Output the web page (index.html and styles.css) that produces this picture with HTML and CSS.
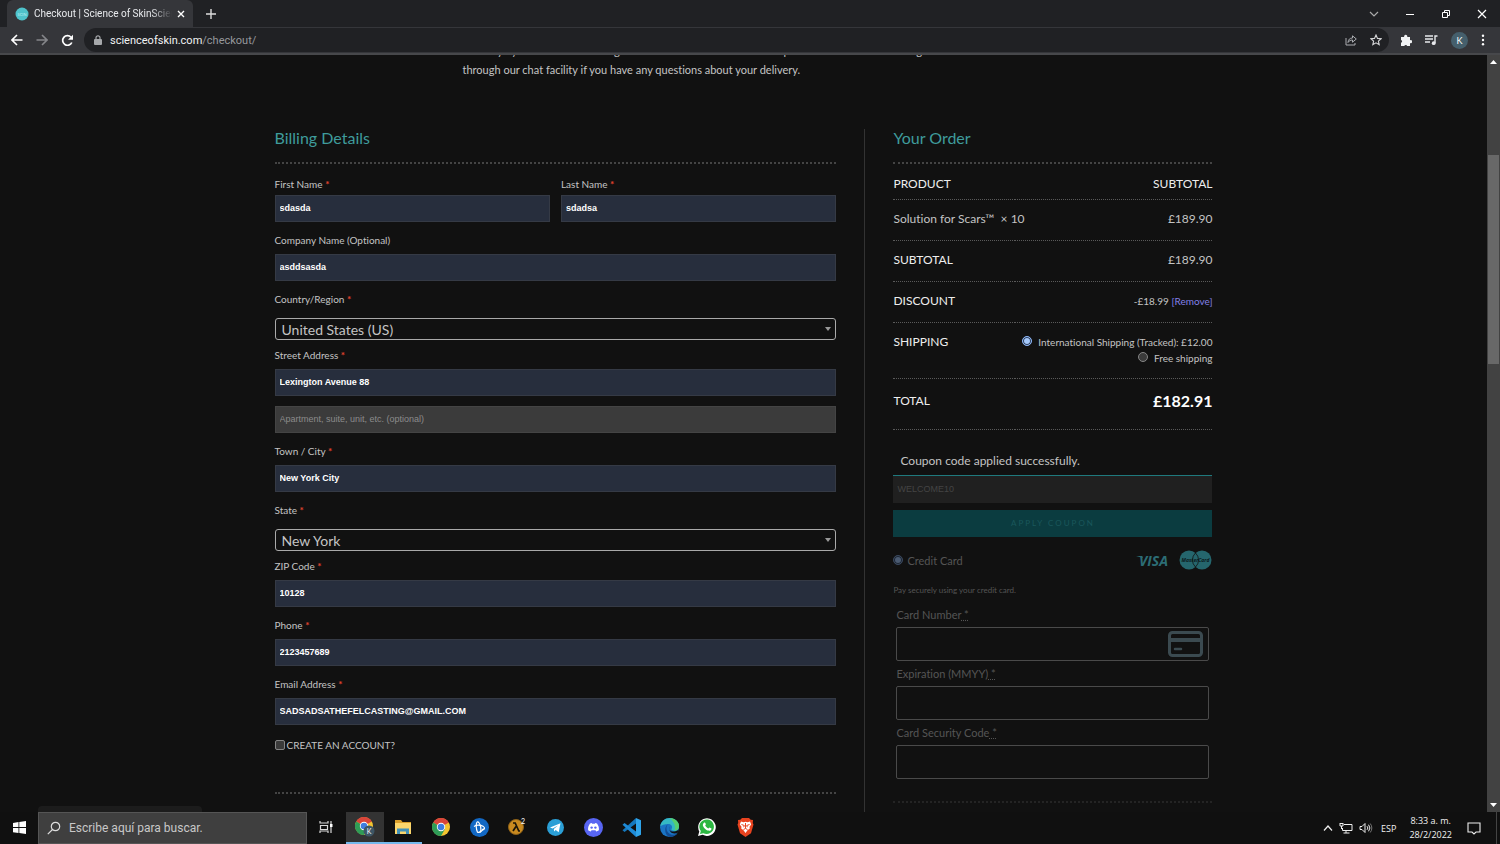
FILE: index.html
```html
<!DOCTYPE html>
<html lang="en">
<head>
  <meta charset="UTF-8">
  <title>Checkout | Science of Skin</title>
  <link rel="stylesheet" href="styles.css">
</head>
<body>

  <!-- browser tabs -->
  <div class="tab-strip">
    <div class="tab">
      <svg class="favicon" viewBox="0 0 14 14"><circle cx="7" cy="7" r="6.5" fill="#4fc3cb"/><text x="7" y="9" class="favicon-text">SCIN</text></svg>
      <span class="tab-title">Checkout | Science of SkinScience</span>
      <button class="icon-btn tab-close" aria-label="Close tab"><svg width="8" height="8" viewBox="0 0 8 8"><path d="M1 1l6 6M7 1L1 7" stroke="#fff" stroke-width="1.4"/></svg></button>
    </div>
    <button class="icon-btn new-tab" aria-label="New tab"><svg width="10" height="10" viewBox="0 0 10 10"><path d="M5 0v10M0 5h10" stroke="#ddd" stroke-width="1.4"/></svg></button>
    <div class="window-buttons">
      <button class="icon-btn" aria-label="Search tabs"><svg width="10" height="10" viewBox="0 0 10 10"><path d="M1 3l4 4 4-4" fill="none" stroke="#aaa" stroke-width="1.2"/></svg></button>
      <button class="icon-btn" aria-label="Minimize"><svg width="10" height="10" viewBox="0 0 10 10"><path d="M1 5.500h8" stroke="#fff"/></svg></button>
      <button class="icon-btn" aria-label="Restore"><svg width="10" height="10" viewBox="0 0 10 10"><path d="M1.500 3.500h5v5h-5zM3.500 3.500v-2h5v5h-2" fill="none" stroke="#fff"/></svg></button>
      <button class="icon-btn" aria-label="Close"><svg width="10" height="10" viewBox="0 0 10 10"><path d="M1 1l8 8M9 1L1 9" stroke="#fff" stroke-width="1.2"/></svg></button>
    </div>
  </div>

  <!-- address bar -->
  <div class="toolbar">
    <button class="icon-btn" aria-label="Back"><svg width="12" height="12" viewBox="0 0 12 12"><path d="M11.500 6H1.500M6 1L1 6l5 5" fill="none" stroke="#fff" stroke-width="1.6"/></svg></button>
    <button class="icon-btn" aria-label="Forward"><svg width="12" height="12" viewBox="0 0 12 12"><path d="M.5 6h10M6 1l5 5-5 5" fill="none" stroke="#85868a" stroke-width="1.600"/></svg></button>
    <button class="icon-btn" aria-label="Reload"><svg width="13" height="13" viewBox="0 0 13 13"><path d="M10.800 8.500A4.800 4.800 0 1 1 10 3.200" fill="none" stroke="#fff" stroke-width="1.700"/><path d="M12 .8v5H7z" fill="#fff"/></svg></button>
    <div class="omnibox">
      <svg width="8" height="10" viewBox="0 0 8 10"><rect y="4" width="8" height="6" rx="1" fill="#a6a8ab"/><path d="M2 4.500V2.800a2 2 0 0 1 4 0v1.700" fill="none" stroke="#a6a8ab" stroke-width="1.200"/></svg>
      <div class="url">scienceofskin.com<span>/checkout/</span></div>
      <button class="icon-btn" aria-label="Share"><svg width="12" height="12" viewBox="0 0 12 12"><path d="M1 4v7h9V9" fill="none" stroke="#aaacb0"/><path d="M3 8.500c.3-3 1.800-4.500 4.500-4.500V1.800L11.300 5 7.500 8.200V6C5.500 6 4 6.800 3 8.500z" fill="none" stroke="#aaacb0"/></svg></button>
      <button class="icon-btn" aria-label="Bookmark"><svg width="12" height="12" viewBox="0 0 12 12"><path d="M6 1l1.500 3.400 3.600.3-2.700 2.400.8 3.600L6 8.800l-3.200 1.900.8-3.600L.9 4.700l3.600-.3z" fill="none" stroke="#d6d7d9" stroke-width="1.100"/></svg></button>
    </div>
    <button class="icon-btn" aria-label="Extensions"><svg width="12" height="12" viewBox="0 0 12 12"><path d="M1 3h3.200a1.600 1.600 0 1 1 3 0H10v3.200a1.500 1.500 0 1 1 0 2.800v3H7.200a1.500 1.500 0 0 0-2.900 0H1V8.800a1.500 1.500 0 0 0 0-2.900z" fill="#f1f3f4"/></svg></button>
    <button class="icon-btn" aria-label="Media"><svg width="13" height="12" viewBox="0 0 13 12"><path d="M0 2h8M0 5h8M0 8h5" stroke="#e8eaed" stroke-width="1.400"/><path d="M12.500 2H10v7" fill="none" stroke="#e8eaed" stroke-width="1.400"/><circle cx="8.700" cy="9.200" r="1.900" fill="#e8eaed"/></svg></button>
    <button class="avatar" aria-label="Profile">K</button>
    <button class="icon-btn" aria-label="Menu"><svg width="4" height="12" viewBox="0 0 4 12"><g fill="#fff"><circle cx="2" cy="1.800" r="1.200"/><circle cx="2" cy="6" r="1.200"/><circle cx="2" cy="10.200" r="1.200"/></g></svg></button>
  </div>

  <div class="viewport">
    <main class="page">
      <p class="intro">Delivery by mail often takes long in most of the areas where we ship to. Do send us all a message<br>through our chat facility if you have any questions about your delivery.</p>

      <form class="checkout">
        <section class="billing">
          <h2>Billing Details</h2>

          <div class="field-row">
            <div class="field">
              <label for="firstName">First Name <em>*</em></label>
              <input type="text" id="firstName" value="sdasda">
            </div>
            <div class="field">
              <label for="lastName">Last Name <em>*</em></label>
              <input type="text" id="lastName" value="sdadsa">
            </div>
          </div>
          <div class="field">
            <label for="company">Company Name (Optional)</label>
            <input type="text" id="company" value="asddsasda">
          </div>
          <div class="field select-field">
            <label for="country">Country/Region <em>*</em></label>
            <div class="select-wrap"><select id="country"><option>United States (US)</option></select></div>
          </div>
          <div class="field">
            <label for="address1">Street Address <em>*</em></label>
            <input type="text" id="address1" value="Lexington Avenue 88">
            <input type="text" class="empty" aria-label="Apartment" placeholder="Apartment, suite, unit, etc. (optional)">
          </div>
          <div class="field">
            <label for="city">Town / City <em>*</em></label>
            <input type="text" id="city" value="New York City">
          </div>
          <div class="field select-field">
            <label for="state">State <em>*</em></label>
            <div class="select-wrap"><select id="state"><option>New York</option></select></div>
          </div>
          <div class="field">
            <label for="zip">ZIP Code <em>*</em></label>
            <input type="text" id="zip" value="10128">
          </div>
          <div class="field">
            <label for="phone">Phone <em>*</em></label>
            <input type="tel" id="phone" value="2123457689">
          </div>
          <div class="field">
            <label for="email">Email Address <em>*</em></label>
            <input type="text" id="email" value="SADSADSATHEFELCASTING@GMAIL.COM">
          </div>
          <div class="create-account">
            <input type="checkbox" id="createAccount">
            <label for="createAccount">CREATE AN ACCOUNT?</label>
          </div>
        </section>

        <section class="order">
          <h2>Your Order</h2>

          <table class="order-table">
            <thead>
              <tr><th>PRODUCT</th><th>SUBTOTAL</th></tr>
            </thead>
            <tbody>
              <tr><td>Solution for Scars™ &nbsp;× 10</td><td>£189.90</td></tr>
              <tr><th>SUBTOTAL</th><td>£189.90</td></tr>
              <tr><th>DISCOUNT</th><td class="small">-£18.99 <a href="#">[Remove]</a></td></tr>
              <tr class="shipping">
                <th>SHIPPING</th>
                <td class="small">
                  <div><input type="radio" name="shipping" id="shipTracked" checked><label for="shipTracked">International Shipping (Tracked): £12.00</label></div>
                  <div><input type="radio" name="shipping" id="shipFree"><label for="shipFree">Free shipping</label></div>
                </td>
              </tr>
              <tr class="total"><th>TOTAL</th><td>£182.91</td></tr>
            </tbody>
          </table>

          <p class="notice">Coupon code applied successfully.</p>

          <!-- faded while the order is being refreshed -->
          <div class="payment">
            <input type="text" class="coupon" aria-label="Coupon code" value="WELCOME10">
            <button type="button" class="apply-coupon">APPLY COUPON</button>
            <div class="method">
              <input type="radio" name="method" id="creditCard" checked>
              <label for="creditCard">Credit Card</label>
              <svg class="visa" width="38" height="20" viewBox="0 0 38 20"><text x="4" y="16" class="visa-text">VISA</text><path d="M1 6h6l1 2z" fill="#2c6d75"/></svg>
              <svg width="33" height="20" viewBox="0 0 33 20"><circle cx="10" cy="10" r="9.500" fill="#25666d"/><circle cx="23" cy="10" r="9.500" fill="#25666d"/><path d="M16.500 3a9.500 9.500 0 0 0 0 14 9.500 9.500 0 0 0 0-14z" fill="none" stroke="#111" stroke-width=".8"/><text x="16.500" y="12" class="mc-text">MasterCard</text></svg>
            </div>
            <p class="hint">Pay securely using your credit card.</p>
            <div class="card-fields">
              <label for="cardNumber">Card Number<abbr title="required"> *</abbr></label>
              <div class="card-input">
                <input type="text" id="cardNumber">
                <svg width="35" height="26" viewBox="0 0 35 26"><rect x="1.500" y="1.500" width="32" height="23" rx="3" fill="none" stroke="#3b4a50" stroke-width="3"/><path d="M1 9h33" stroke="#3b4a50" stroke-width="4"/><path d="M7 18h6" stroke="#3b4a50" stroke-width="2.500" stroke-linecap="round"/></svg>
              </div>
              <label for="expiry">Expiration (MMYY)<abbr title="required"> *</abbr></label>
              <div class="card-input"><input type="text" id="expiry"></div>
              <label for="cvc">Card Security Code<abbr title="required"> *</abbr></label>
              <div class="card-input"><input type="text" id="cvc"></div>
            </div>
          </div>
        </section>
      </form>
    </main>

    <div class="scrollbar">
      <svg width="7" height="4" viewBox="0 0 7 4"><path d="M0 4l3.500-4L7 4z" fill="#fff"/></svg>
      <div class="thumb"></div>
      <svg width="7" height="4" viewBox="0 0 7 4"><path d="M0 0l3.500 4L7 0z" fill="#fff"/></svg>
    </div>
    <div class="status-bubble"></div>
  </div>

  <footer class="taskbar">
    <button class="task start" aria-label="Start"><svg width="13" height="13" viewBox="0 0 13 13"><path d="M0 1.900L5.500 1v5.100H0zM6.300.9L13 0v6.100H6.300zM0 6.900h5.500V12L0 11.200zM6.300 6.900H13V13l-6.700-.9z" fill="#fff"/></svg></button>
    <div class="search">
      <svg width="14" height="14" viewBox="0 0 14 14"><circle cx="8.500" cy="5.500" r="4.200" fill="none" stroke="#ddd" stroke-width="1.200"/><path d="M5.500 8.500L.8 13.200" stroke="#ddd" stroke-width="1.200"/></svg>
      <input type="text" aria-label="Buscar" placeholder="Escribe aquí para buscar.">
    </div>
    <button class="task" aria-label="Task view"><svg width="14" height="12" viewBox="0 0 14 12"><path d="M1 0v2h8V0M1 12v-2h8v2M1.500 4.500h7v4h-7zM12 0v12" fill="none" stroke="#d8d8d8" stroke-width="1.200"/><rect x="11" y="3" width="2.500" height="3" fill="#fff"/></svg></button>
    <button class="task active" aria-label="Chrome profile K"><svg width="20" height="20" viewBox="0 0 20 20"><circle cx="9" cy="9" r="9" fill="#f4c430"/><path d="M9 9L1.200 4.500A9 9 0 0 1 16.800 4.500z" fill="#d9453a"/><path d="M1.200 4.500A9 9 0 0 0 9 18l3.900-6.800L9 9z" fill="#2f9c57"/><circle cx="9" cy="9" r="4.200" fill="#fff"/><circle cx="9" cy="9" r="3.300" fill="#3f7de0"/><circle cx="14" cy="14" r="5.500" fill="#3d5666"/><text x="14" y="16.500" class="badge-text">K</text></svg></button>
    <button class="task open" aria-label="File Explorer"><svg width="18" height="16" viewBox="0 0 18 16"><path d="M1 1h6l1.500 2H17v12H1z" fill="#d99f2b"/><path d="M1 4h16v11H1z" fill="#fbd66c"/><path d="M3 15V9.500h12V15h-3v-2.500H6V15z" fill="#4391b8"/></svg></button>
    <button class="task" aria-label="Chrome"><svg width="18" height="18" viewBox="0 0 18 18"><circle cx="9" cy="9" r="9" fill="#f4c430"/><path d="M9 9L1.200 4.500A9 9 0 0 1 16.800 4.500z" fill="#d9453a"/><path d="M1.200 4.500A9 9 0 0 0 9 18l3.900-6.800L9 9z" fill="#2f9c57"/><circle cx="9" cy="9" r="4.200" fill="#fff"/><circle cx="9" cy="9" r="3.300" fill="#3f7de0"/></svg></button>
    <button class="task" aria-label="Battle.net"><svg width="19" height="19" viewBox="0 0 19 19"><circle cx="9.500" cy="9.500" r="9.500" fill="#1268c4"/><g fill="none" stroke="#fff" stroke-width="1.200"><path d="M7 4c1.500-.8 3 2 3.600 4.500.6 2.500.2 5-.8 6"/><path d="M4 8.500c2-1.700 6-2 9-.2 2.500 1.500 1.800 3-1 3.800"/><path d="M7 4C5.800 6 6 11 7.500 14.200c2 .8 4.500-1.200 6-3.700"/></g></svg></button>
    <button class="task" aria-label="Half-Life"><svg width="18" height="18" viewBox="0 0 18 18"><circle cx="8" cy="9" r="7.500" fill="#c98a20" stroke="#8c6018"/><path d="M5 5h2.200l3.600 8H12M8 8.500L5 13" fill="none" stroke="#1a1408" stroke-width="1.700"/><text x="15" y="6" class="hl-text">2</text></svg></button>
    <button class="task" aria-label="Telegram"><svg width="17" height="17" viewBox="0 0 17 17"><circle cx="8.500" cy="8.500" r="8.500" fill="#2b9fd6"/><path d="M3 8.500l10.500-4.200-1.800 9-3-2.200-1.600 1.500-.3-2.600L11 6.500l-5.400 3z" fill="#fff"/></svg></button>
    <button class="task" aria-label="Discord"><svg width="19" height="19" viewBox="0 0 19 19"><circle cx="9.500" cy="9.500" r="9.500" fill="#5865f2"/><path d="M6 5.500l1.700-.5.500.8h2.600l.5-.8 1.700.5c1.600 2.200 2.200 4.500 1.900 6.700-.9.800-1.800 1.100-2.700 1.300l-.7-1.200H7.500l-.7 1.200c-.9-.2-1.800-.5-2.700-1.300-.3-2.200.3-4.500 1.900-6.700z" fill="#fff"/><circle cx="7.600" cy="9.600" r="1.200" fill="#5865f2"/><circle cx="11.400" cy="9.600" r="1.200" fill="#5865f2"/></svg></button>
    <button class="task" aria-label="VS Code"><svg width="19" height="19" viewBox="0 0 19 19"><path d="M14 0l5 2.300v14.400L14 19z" fill="#2fa4ea"/><path d="M14 0v5.500L2.500 14 .5 12.300z" fill="#1478be"/><path d="M14 19v-5.500L2.500 5 .5 6.700z" fill="#1e8ad6"/></svg></button>
    <button class="task" aria-label="Edge"><svg width="19" height="19" viewBox="0 0 19 19"><circle cx="9.500" cy="9.500" r="9.500" fill="#1b74c4"/><path d="M.3 8.500C1 3 5.200 0 9.800 0 15 0 19 3.800 19 8.200c0 3-2.300 4.600-4.700 4.600-1.800 0-3.300-.8-2.800-1.800 1.500-2.200 0-5-3.200-5C4.800 6 1.500 7 .3 8.500z" fill="#35b9c4"/><path d="M9.800 0C15 0 19 3.800 19 8.200c0 3-2.300 4.600-4.700 4.600 2-3 .5-8-4.500-12.800z" fill="#55cf70"/><path d="M8.300 6c-3 2.500-2.500 8.500 2.500 10.500 2.500.8 5 .2 7-1.500a9.500 9.500 0 0 1-8.300 4C4 17 4 8 8.300 6z" fill="#124c94"/><path d="M9.800 8.300c-1.500 3.500.8 5.700 4.500 5.200 1.800-.2 3.400-.9 4.400-1.700l-.9 2.700c-4 2.700-10 0-8-6.200z" fill="#111"/></svg></button>
    <button class="task" aria-label="WhatsApp"><svg width="18" height="18" viewBox="0 0 18 18"><path d="M0 18l1.300-4.600A8.800 8.800 0 1 1 4.700 16.800z" fill="#fff"/><path d="M2 16l.8-2.900A7.300 7.300 0 1 1 5.300 15.200z" fill="#2cb742"/><path d="M6 4.800c.8-.7 1.300-.2 1.900 1.500L7.200 7.500c.8 1.500 1.800 2.400 3.200 3l1.100-1.100 2 1c0 1.900-1.600 2.500-2.900 2.200-2.800-.6-5.500-3.300-5.800-5.700 0-.8.500-1.500 1.200-2.100z" fill="#fff"/></svg></button>
    <button class="task" aria-label="Brave"><svg width="17" height="19" viewBox="0 0 17 19"><path d="M5 0h7l1.700 1.800L16 2l-.2 3 .7 1.500-2.500 8.700L8.500 19 3 15.200.5 6.500 1.200 5 1 2l2.300-.2z" fill="#e8431f"/><path d="M4 3.500l2.500.7 2-.4 2 .4 2.500-.7 1.200 3-1.700 2.300.3 1.700-2.300 1.700L8.500 15l-2-2.800-2.300-1.700.3-1.700-1.700-2.300z" fill="#fff"/><path d="M4.500 6.500l2.800 1-.6 1.700M12.500 6.500l-2.800 1 .6 1.700M6.500 11.500l2-1 2 1M8.500 5v5.500" fill="none" stroke="#e8431f"/></svg></button>

    <div class="tray">
      <svg width="10" height="6" viewBox="0 0 10 6"><path d="M1 5.500L5 1l4 4.500" fill="none" stroke="#eee" stroke-width="1.200"/></svg>
      <svg width="14" height="12" viewBox="0 0 14 12"><path d="M5 2.500h8v6H3.500V6M7 8.500V11M4.500 11h6" fill="none" stroke="#eee"/><path d="M1 1v3h3V1M2.500 4v3M1 1.500h3" fill="none" stroke="#eee"/></svg>
      <svg width="14" height="12" viewBox="0 0 14 12"><path d="M1 4.500h2l3-3v9l-3-3H1zM8 4.200a2.500 2.500 0 0 1 0 3.600M9.500 2.700a5 5 0 0 1 0 6.600" fill="none" stroke="#eee"/><path d="M11.200 1.500a7 7 0 0 1 0 9" fill="none" stroke="#777"/></svg>
      <span class="lang">ESP</span>
      <div class="clock">8:33 a. m.<br>28/2/2022</div>
      <svg width="14" height="13" viewBox="0 0 14 13"><path d="M1 1h12v9H9l-2 2-2-2H1z" fill="none" stroke="#eee" stroke-width="1.100"/></svg>
    </div>
  </footer>

</body>
</html>
```
FILE: styles.css
```css
* {
  box-sizing: border-box;
}
body {
  margin: 0;
  height: 100vh;
  display: flex;
  flex-direction: column;
  background-color: #111;
  color: #c4c4c4;
  font-family: Lato, sans-serif;
  font-size: 11px;
  font-variant-ligatures: no-common-ligatures;
  overflow: hidden;
}
h2, p {
  margin: 0;
}
button, input, select {
  margin: 0;
  padding: 0;
  border: none;
  font-family: inherit;
}
button {
  background: none;
}
svg {
  flex-shrink: 0;
}
.icon-btn {
  display: flex;
  align-items: center;
  justify-content: center;
}

/* browser */
.tab-strip {
  display: flex;
  align-items: center;
  height: 27px;
  padding-left: 7px;
  background-color: #202124;
  font-family: Roboto, sans-serif;
}
.tab {
  display: flex;
  align-items: center;
  gap: 5px;
  width: 186px;
  height: 27px;
  padding: 0 8px;
  border-radius: 6px 6px 0 0;
  background-color: #35363a;
}
.favicon {
  width: 14px;
  height: 14px;
}
.favicon-text {
  fill: #bdf0f3;
  font: 4px Lato, sans-serif;
  text-anchor: middle;
}
.tab-title {
  flex: 1;
  overflow: hidden;
  white-space: nowrap;
  color: #e8eaed;
  font-size: 10px;
  -webkit-mask-image: linear-gradient(to right, #000 85%, transparent);
  mask-image: linear-gradient(to right, #000 85%, transparent);
}
.new-tab {
  width: 36px;
}
.window-buttons {
  display: flex;
  margin-left: auto;
}
.window-buttons .icon-btn {
  width: 36px;
  height: 24px;
}
.toolbar {
  display: flex;
  align-items: center;
  gap: 13px;
  height: 28px;
  padding: 0 15px 0 11px;
  background-color: #35363a;
  border-bottom: 2px solid #47484b;
}
.omnibox {
  flex: 1;
  display: flex;
  align-items: center;
  gap: 8px;
  height: 24px;
  padding: 0 7px 0 10px;
  margin: 0 -2px 0 -3px;
  border-radius: 12px;
  background-color: #202124;
}
.omnibox .icon-btn {
  margin-left: 5px;
}
.url {
  flex: 1;
  color: #f1f3f4;
  font: 11px Roboto, sans-serif;
}
.url span {
  color: #96989c;
}
.avatar {
  width: 17px;
  height: 17px;
  border-radius: 50%;
  background-color: #455f6c;
  color: #fff;
  font-size: 9px;
}

/* page */
.viewport {
  flex: 1;
  display: flex;
  min-height: 0;
  position: relative;
}
.page {
  flex: 1;
  display: flex;
  flex-direction: column;
  overflow: hidden;
}
.intro {
  width: 100%;
  max-width: 562px;
  margin: -14px auto 50px;
  line-height: 19px;
}
.checkout {
  flex: 1 0 auto;
  display: flex;
  width: 100%;
  max-width: 938px;
  margin: 0 auto;
}
.billing {
  width: 63%;
  padding-right: 28px;
  border-right: 1px solid #333;
}
.order {
  width: 37%;
  padding-left: 28px;
}
h2 {
  height: 35px;
  margin-bottom: 12px;
  border-bottom: 2px dotted #444;
  color: #3f9c9c;
  font-size: 16px;
  font-weight: normal;
  line-height: 18px;
}
.field {
  flex: 1;
  margin-bottom: 10px;
}
.field label {
  display: block;
  margin-bottom: 6px;
  font-size: 10px;
  line-height: 16px;
}
.field em {
  color: #e0442e;
  font-style: normal;
  font-weight: bold;
}
.field input {
  display: block;
  width: 100%;
  height: 27px;
  padding: 0 4px 1px;
  border: 1px solid #353a45;
  background-color: #272e3d;
  color: #fff;
  font: bold 9px "Liberation Sans", sans-serif;
}
.field input.empty {
  margin-top: 10px;
  border-color: #444;
  background-color: #3b3b3b;
  font-weight: normal;
}
.field input::placeholder {
  color: #8b8b8b;
}
.field-row {
  display: flex;
  gap: 11px;
}
.field-row label {
  margin-bottom: 3px;
}
.select-field {
  margin-bottom: 7px;
}
.select-field label {
  margin-bottom: 11px;
}
.select-wrap {
  position: relative;
}
.select-wrap::after {
  content: "";
  position: absolute;
  right: 5px;
  top: 9px;
  border: 3px solid transparent;
  border-top: 4px solid #999;
  border-bottom: none;
}
select {
  appearance: none;
  display: block;
  width: 100%;
  height: 22px;
  padding: 0 6px;
  border: 1px solid #aaa;
  border-radius: 3px;
  background-color: #111;
  color: #c4c4c4;
  font-size: 14px;
}
input[type="checkbox"], input[type="radio"] {
  appearance: none;
  width: 10px;
  height: 10px;
  border: 1px solid #858585;
  border-radius: 2px;
  background-color: #3b3b3b;
}
input[type="radio"] {
  border-radius: 50%;
}
input[type="radio"]:checked {
  border-color: #8ab4f8;
  background-color: #a5c8fb;
  box-shadow: inset 0 0 0 1px #26364f;
}
.create-account {
  display: flex;
  align-items: center;
  gap: 2px;
  height: 59px;
  padding-bottom: 38px;
  border-bottom: 2px dotted #444;
  font-size: 10px;
}

.order-table {
  width: 100%;
  table-layout: fixed;
  border-collapse: collapse;
  font-size: 12px;
  white-space: nowrap;
}
.order-table th, .order-table td {
  height: 41px;
  padding: 0 0 2px;
  border-bottom: 1px dotted #5a5a5a;
  text-align: left;
}
.order-table th {
  color: #eee;
  font-weight: normal;
}
.order-table thead th {
  height: 23px;
  padding-bottom: 7px;
}
.order-table thead th:first-child {
  width: 38%;
}
.order-table th:last-child, .order-table td:last-child {
  text-align: right;
}
.order-table .small {
  font-size: 10px;
}
.order-table a {
  color: #8280e8;
  text-decoration: none;
}
.order-table .shipping th, .order-table .shipping td {
  height: 56px;
  padding-top: 11px;
  vertical-align: top;
}
.shipping div {
  display: flex;
  justify-content: flex-end;
  gap: 6px;
  line-height: 16px;
}
.shipping input {
  margin-top: 2px;
}
.order-table .total th, .order-table .total td {
  height: 51px;
  padding-bottom: 7px;
}
.order-table .total td {
  color: #fff;
  font-size: 16px;
  font-weight: bold;
}
.notice {
  padding: 21px 7px 4px;
  font-size: 12px;
  line-height: 20px;
}
.payment {
  padding-bottom: 22px;
  border-bottom: 2px dotted #242424;
  color: #555;
}
.coupon {
  display: block;
  width: 100%;
  height: 28px;
  padding: 0 4px;
  border-top: 1px solid #1f7a7e;
  background-color: #202020;
  color: #444;
  font: 9px "Liberation Sans", sans-serif;
}
.apply-coupon {
  display: block;
  width: 100%;
  height: 27px;
  margin-top: 7px;
  background-color: #0b3c40;
  color: #1a575b;
  font-size: 8px;
  letter-spacing: 2px;
}
.method {
  display: flex;
  align-items: center;
  gap: 4px;
  height: 47px;
}
.method input[type="radio"]:checked {
  border-color: #38465c;
  background-color: #4b5b72;
  box-shadow: inset 0 0 0 1px #1b2430;
}
.visa {
  margin-left: auto;
  margin-right: 2px;
}
.visa-text {
  fill: #2c6d75;
  font: italic bold 14px "Open Sans", sans-serif;
}
.mc-text {
  fill: #0c1a1c;
  font: italic bold 5px "Open Sans", sans-serif;
  text-anchor: middle;
}
.hint {
  font-size: 8px;
  line-height: 12px;
}
.card-fields {
  padding: 6px 3px 0;
}
.card-fields label {
  display: block;
  padding: 3px 0;
  line-height: 19px;
}
abbr {
  text-decoration: underline dotted;
}
.card-input {
  display: flex;
  align-items: center;
  height: 34px;
  padding-right: 5px;
  border: 1px solid #4a4a4a;
  border-radius: 2px;
}
.card-input input {
  flex: 1;
  height: 32px;
  background: none;
  color: #555;
}
.scrollbar {
  display: flex;
  flex-direction: column;
  align-items: center;
  width: 13px;
  padding: 5px 0;
  background-color: #424242;
}
.thumb {
  width: 11px;
  height: 28%;
  margin: 91px 0 auto;
  background-color: #686868;
}
.status-bubble {
  position: absolute;
  left: 38px;
  bottom: 0;
  width: 164px;
  height: 6px;
  border-radius: 4px 4px 0 0;
  background-color: #1c1c1c;
}

/* taskbar */
.taskbar {
  display: flex;
  height: 32px;
  background-color: #101010;
  font-family: "Open Sans", sans-serif;
}
.task {
  display: flex;
  align-items: center;
  justify-content: center;
  width: 38px;
  border-bottom: 2px solid transparent;
}
.task.active {
  margin-left: 1px;
  background-color: #333;
  border-color: #76b9ed;
}
.task.open {
  border-color: #76b9ed;
}
.search {
  display: flex;
  align-items: center;
  gap: 8px;
  width: 269px;
  padding: 0 8px;
  border: 1px solid #555;
  background-color: #3f3f3f;
}
.search input {
  flex: 1;
  background: none;
  color: #ccc;
  font: 12px Roboto, sans-serif;
}
.search input::placeholder {
  color: #c8c8c8;
}
.badge-text, .hl-text {
  fill: #fff;
  font: 7px Lato, sans-serif;
  text-anchor: middle;
}
.tray {
  display: flex;
  align-items: center;
  gap: 6px;
  margin: 0 3px 0 auto;
  padding-right: 15px;
  border-right: 1px solid #444;
  color: #f1f1f1;
}
.lang {
  margin: 0 7px 0 2px;
  font-size: 9px;
}
.clock {
  margin-right: 9px;
  font-size: 9px;
  line-height: 14px;
  text-align: center;
}
```
